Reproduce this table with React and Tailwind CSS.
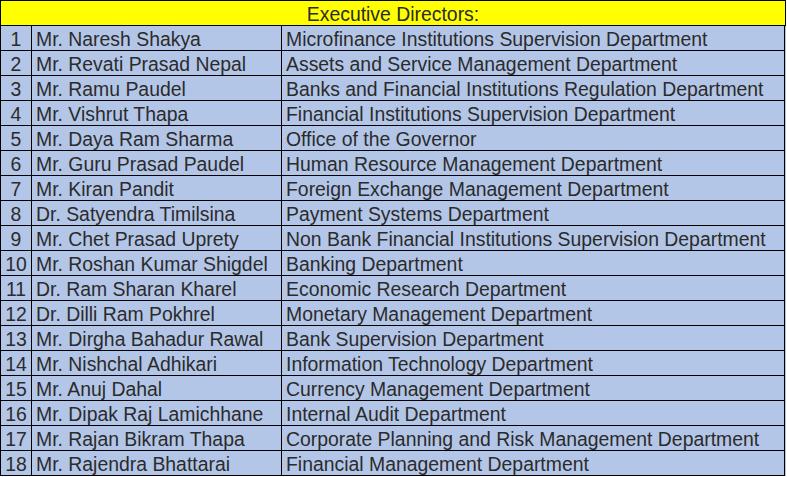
const rows = [
  ["Mr. Naresh Shakya", "Microfinance Institutions Supervision Department"],
  ["Mr. Revati Prasad Nepal", "Assets and Service Management Department"],
  ["Mr. Ramu Paudel", "Banks and Financial Institutions Regulation Department"],
  ["Mr. Vishrut Thapa", "Financial Institutions Supervision Department"],
  ["Mr. Daya Ram Sharma", "Office of the Governor"],
  ["Mr. Guru Prasad Paudel", "Human Resource Management Department"],
  ["Mr. Kiran Pandit", "Foreign Exchange Management Department"],
  ["Dr. Satyendra Timilsina", "Payment Systems Department"],
  ["Mr. Chet Prasad Uprety", "Non Bank Financial Institutions Supervision Department"],
  ["Mr. Roshan Kumar Shigdel", "Banking Department"],
  ["Dr. Ram Sharan Kharel", "Economic Research Department"],
  ["Dr. Dilli Ram Pokhrel", "Monetary Management Department"],
  ["Mr. Dirgha Bahadur Rawal", "Bank Supervision Department"],
  ["Mr. Nishchal Adhikari", "Information Technology Department"],
  ["Mr. Anuj Dahal", "Currency Management Department"],
  ["Mr. Dipak Raj Lamichhane", "Internal Audit Department"],
  ["Mr. Rajan Bikram Thapa", "Corporate Planning and Risk Management Department"],
  ["Mr. Rajendra Bhattarai", "Financial Management Department"],
]

export default function App() {
  return (
    <div className="w-[787px] h-[477px] bg-white font-['Liberation_Sans',Arial,sans-serif] text-[19.4px] text-[#2b2b2b]">
      <div className="w-[786px] border-l border-t border-black">
        <div className="h-[25px] bg-[#ffff00] border-r border-b border-black flex items-center justify-center leading-none pt-[3px]">
          Executive Directors:
        </div>
        {rows.map(([name, dept], i) => (
          <div key={i} className="grid grid-cols-[31px_250px_503px] h-[25px] bg-[#b4c6e7] leading-none">
            <div className="border-r border-b border-black flex items-center justify-center pt-[3px]">{i + 1}</div>
            <div className="border-r border-b border-black flex items-center pl-[4px] pt-[3px] whitespace-nowrap">{name}</div>
            <div className="border-r border-b border-black flex items-center pl-[4px] pt-[3px] whitespace-nowrap">{dept}</div>
          </div>
        ))}
      </div>
    </div>
  )
}
